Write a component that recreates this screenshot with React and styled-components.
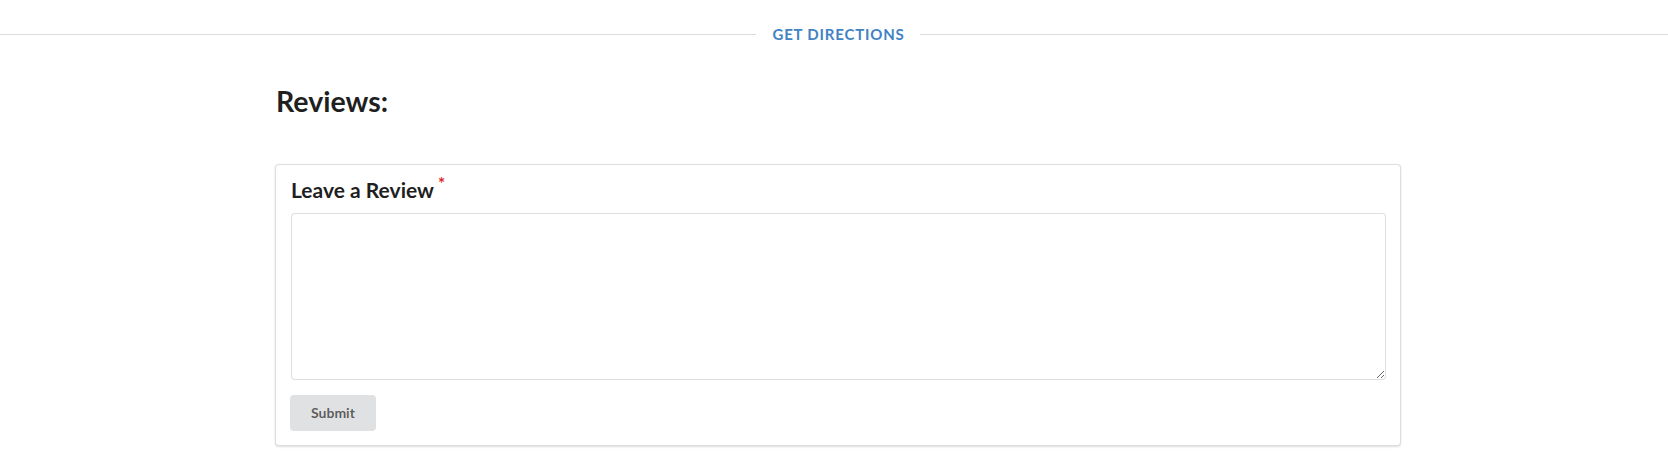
import React from 'react';
import styled, { createGlobalStyle } from 'styled-components';

const GlobalStyle = createGlobalStyle`
  body {
    margin: 0;
    background: #fff;
    font-family: Lato, "Open Sans", sans-serif;
    color: rgba(0, 0, 0, 0.87);
    overflow-x: hidden;
  }
`;

const Page = styled.div`
  padding-top: 24px;
  padding-bottom: 16px;
  overflow: hidden;
`;

const Divider = styled.div`
  display: flex;
  align-items: center;
  width: calc(100% + 8px);
  height: 20px;
  &::before,
  &::after {
    content: '';
    flex: 1;
    height: 1px;
    background: #dcdcdc;
  }
`;

const DividerLink = styled.a`
  padding: 0 15px 0 16px;
  color: #4183c4;
  font-size: 15px;
  font-weight: 700;
  letter-spacing: 0.8px;
  text-transform: uppercase;
  text-decoration: none;
  white-space: nowrap;
`;

const Content = styled.div`
  width: 1126px;
  margin-left: 275px;
`;

const Heading = styled.h2`
  margin: 39px 0 0 1px;
  font-size: 28.5px;
  font-weight: 700;
  line-height: 36px;
  color: #1f1f1f;
`;

const Card = styled.form`
  box-sizing: border-box;
  margin-top: 45px;
  padding: 14px;
  border: 1px solid rgba(34, 36, 38, 0.15);
  border-radius: 4px;
  box-shadow: 0 1px 2px 0 rgba(34, 36, 38, 0.15);
  background: #fff;
`;

const Label = styled.label`
  display: block;
  margin: 0 0 12px 1px;
  font-size: 21px;
  font-weight: 700;
  line-height: 22px;
  color: #1f1f1f;
`;

const Required = styled.span`
  margin-left: 4px;
  color: #db2828;
  font-size: 17px;
  line-height: 0;
  vertical-align: 8px;
`;

const TextArea = styled.textarea`
  display: block;
  box-sizing: border-box;
  width: calc(100% - 1px);
  height: 167px;
  margin-left: 1px;
  padding: 11px 14px;
  border: 1px solid rgba(34, 36, 38, 0.15);
  border-radius: 4px;
  font-family: inherit;
  font-size: 14px;
  outline: none;
`;

const Button = styled.button`
  display: block;
  margin-top: 15px;
  padding: 11px 21px;
  border: none;
  border-radius: 4px;
  background: #e0e1e2;
  color: rgba(0, 0, 0, 0.6);
  font-family: inherit;
  font-size: 14px;
  font-weight: 700;
  line-height: 14px;
  cursor: pointer;
`;

function App() {
  return (
    <Page>
      <GlobalStyle />
      <Divider>
        <DividerLink href="#">Get Directions</DividerLink>
      </Divider>
      <Content>
        <Heading>Reviews:</Heading>
        <Card onSubmit={(e) => e.preventDefault()}>
          <Label>
            Leave a Review<Required>*</Required>
          </Label>
          <TextArea />
          <Button type="submit">Submit</Button>
        </Card>
      </Content>
    </Page>
  );
}

export default App;
